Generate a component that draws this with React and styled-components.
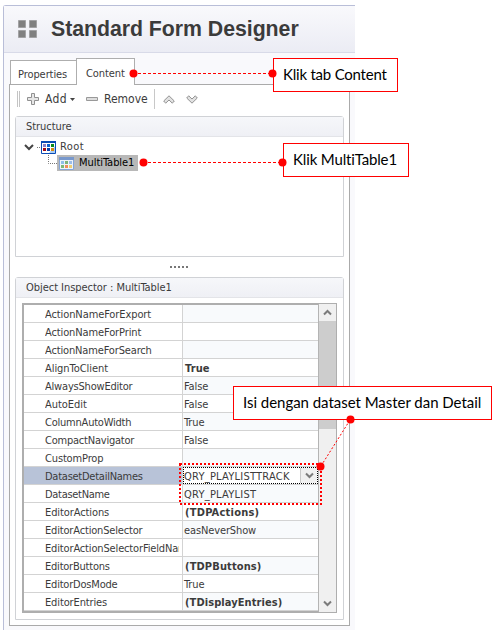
import React from "react";
import styled, { createGlobalStyle } from "styled-components";

const Global = createGlobalStyle`
  * { box-sizing: border-box; }
  body { margin: 0; background: #fff; overflow: hidden; }
`;

const Stage = styled.main`
  position: relative;
  width: 495px;
  height: 631px;
  padding: 5px 0 1px 3px;
  overflow: hidden;
  background: #fff;
  color: #3b3b3b;
  font: 11px/18px "DejaVu Sans Condensed", "DejaVu Sans", sans-serif;
  font-stretch: condensed;
  letter-spacing: -0.22px;
  white-space: nowrap;
`;

const Window = styled.section`
  display: flex;
  flex-direction: column;
  width: 352px;
  height: 625px;
  border: solid #b9bed8;
  border-width: 1px 0 0 1px;
  border-top-left-radius: 3px;
  background: #f9f9fc;
`;

const TitleBar = styled.header`
  display: flex;
  align-items: center;
  flex: none;
  height: 47px;
  padding-left: 14px;
  gap: 14px;
  border-bottom: 1px solid #d8dae8;
  background: linear-gradient(#f9f9fc, #ebecf4);
`;

const Title = styled.h1`
  margin: 0;
  font: bold 21.3px/46px "Liberation Sans", Arial, sans-serif;
  letter-spacing: -0.04px;
`;

const TabStrip = styled.nav`
  display: flex;
  align-items: flex-end;
  flex: none;
  height: 31px;
  padding-left: 6px;
  position: relative;
  z-index: 1;
`;

const Tab = styled.div`
  width: ${(p) => (p.$active ? 59 : 67)}px;
  height: ${(p) => (p.$active ? 27 : 24)}px;
  margin-right: ${(p) => (p.$active ? 0 : -1)}px;
  margin-bottom: ${(p) => (p.$active ? -1 : 0)}px;
  padding: ${(p) => (p.$active ? "6px 0 0 9px" : "5px 0 0 7px")};
  border: 1px solid #aeaeae;
  border-bottom: 0;
  background: #fff;
  letter-spacing: -0.08px;
`;

const Page = styled.section`
  display: flex;
  flex-direction: column;
  width: 341px;
  height: 542px;
  margin-left: 5px;
  padding: 0 5px;
  border: 1px solid #aaaaaa;
  background: #fff;
`;

const Toolbar = styled.div`
  display: flex;
  align-items: center;
  flex: none;
  height: 31px;
  padding: 0 0 3px 2px;
  font-size: 12px;
`;

const Grip = styled.i`
  width: 3px;
  height: 16px;
  border: solid #c4c4c4;
  border-width: 0 1px;
`;

const ToolButton = styled.span`
  display: flex;
  align-items: center;
  gap: 6px;
  width: ${(p) => p.$width}px;
  margin-left: ${(p) => p.$before}px;
  letter-spacing: ${(p) => p.$track || 0}px;
`;

const DropCaret = styled.svg`
  margin-left: -3px;
`;

const Separator = styled.i`
  width: 1px;
  height: 20px;
  margin-right: 8px;
  background: #c8c8c8;
`;

const Chevrons = styled.span`
  display: flex;
  gap: 11px;
`;

const Panel = styled.section`
  flex: none;
  height: ${(p) => p.$height}px;
  border: 1px solid #d0d2d6;
  border-radius: 3px 3px 0 0;
`;

const PanelTitle = styled.h2`
  height: 20px;
  margin: 0;
  padding: 1px 0 0 10px;
  border-bottom: 1px solid #e3e4e8;
  background: linear-gradient(#f6f7fa, #eff0f5);
  font: inherit;
  letter-spacing: ${(p) => p.$track}px;
`;

const TreeRow = styled.div`
  display: flex;
  align-items: center;
  height: 16px;
  padding-left: ${(p) => p.$indent}px;
`;

const Tree = styled.div`
  padding-top: 2px;
`;

const Guide = styled.svg`
  flex: none;
  display: block;
`;

const RootLabel = styled.span`
  padding-left: 4px;
  letter-spacing: 0.4px;
`;

const Selected = styled.span`
  display: flex;
  align-items: center;
  gap: 5px;
  width: 81px;
  height: 16px;
  padding-left: 2px;
  background: #b8b8b8;
  color: #000;
  letter-spacing: -0.05px;
`;

const Splitter = styled.div`
  display: flex;
  justify-content: center;
  flex: none;
  gap: 2px;
  height: 20px;
  padding: 9px 2px 0 0;
`;

const SplitDot = styled.i`
  width: 2px;
  height: 2px;
  background: #777;
`;

const GridBox = styled.div`
  display: flex;
  width: 315px;
  height: 310px;
  margin: 5px 0 0 6px;
  border: 2px solid #aeaeae;
  border-right-width: 1px;
`;

const Rows = styled.div`
  width: 294px;
`;

const Row = styled.div`
  display: grid;
  grid-template: 18px / 159px 135px;
`;

const Name = styled.div`
  margin-right: 1px;
  padding-left: 21px;
  border-bottom: 1px solid #d3d3d3;
  line-height: 19px;
  box-shadow: 1px 0 #d3d3d3;
  background: ${(p) => (p.$active ? "#b8c3d8" : "#fff")};
`;

const NameClip = styled.span`
  display: block;
  width: 134px;
  height: 17px;
  overflow: hidden;
  letter-spacing: ${(p) => p.$track}px;
`;

const Value = styled.div`
  padding-left: ${(p) => (p.$bold ? 2 : 1)}px;
  border-bottom: 1px solid #d3d3d3;
  line-height: 19px;
  background: ${(p) => (p.$tint ? "#f8fafc" : "#fff")};
  font-weight: ${(p) => (p.$bold ? 700 : 400)};
  letter-spacing: ${(p) => p.$track}px;
`;

const Editor = styled.div`
  display: flex;
  justify-content: space-between;
  height: 17px;
  margin-left: -1px;
  border: 1px dotted #000;
  background: #fff;
  line-height: 17px;
`;

const DropButton = styled.span`
  display: grid;
  place-items: center;
  width: 17px;
  border-left: 1px solid #c8c8c8;
  background: #f0f0f0;
`;

const ScrollBar = styled.div`
  display: flex;
  flex-direction: column;
  width: 18px;
  border-left: 1px solid #b4b4b4;
  margin-top: -1px;
  margin-bottom: -1px;
  background: #f0f0f0;
`;

const ScrollButton = styled.span`
  display: grid;
  place-items: center;
  height: 17px;
`;

const Thumb = styled.div`
  height: 108px;
  margin-bottom: auto;
  background: #cdcdcd;
`;

const Callout = styled.div`
  position: absolute;
  z-index: 2;
  left: ${(p) => p.$x}px;
  top: ${(p) => p.$y}px;
  width: ${(p) => p.$w}px;
  height: 34px;
  padding-left: 9px;
  border: 1px solid #f00;
  background: #fff;
  color: #000;
  font: 15px/31px Lato, sans-serif;
  font-variant-ligatures: none;
  letter-spacing: ${(p) => p.$track}px;
`;

const Connectors = styled.svg`
  position: absolute;
  z-index: 3;
  inset: 0;
  pointer-events: none;
`;

const rows = [
  { name: "ActionNameForExport", nameTrack: -0.1 },
  { name: "ActionNameForPrint", nameTrack: -0.12 },
  { name: "ActionNameForSearch", nameTrack: -0.15 },
  { name: "AlignToClient", value: "True", bold: true, nameTrack: -0.05, valueTrack: 0.1 },
  { name: "AlwaysShowEditor", value: "False", nameTrack: -0.2 },
  { name: "AutoEdit", value: "False", nameTrack: -0.05 },
  { name: "ColumnAutoWidth", value: "True" },
  { name: "CompactNavigator", value: "False" },
  { name: "CustomProp", nameTrack: -0.15 },
  { name: "DatasetDetailNames", value: "QRY_PLAYLISTTRACK", nameTrack: -0.25, valueTrack: 0.24 },
  { name: "DatasetName", value: "QRY_PLAYLIST", nameTrack: -0.3, valueTrack: 0.24 },
  { name: "EditorActions", value: "(TDPActions)", bold: true, nameTrack: -0.1, valueTrack: 0.22 },
  { name: "EditorActionSelector", value: "easNeverShow", nameTrack: -0.17, valueTrack: -0.12 },
  { name: "EditorActionSelectorFieldName", nameTrack: -0.15 },
  { name: "EditorButtons", value: "(TDPButtons)", bold: true, valueTrack: 0.12 },
  { name: "EditorDosMode", value: "True", nameTrack: -0.2 },
  { name: "EditorEntries", value: "(TDisplayEntries)", bold: true, nameTrack: -0.13, valueTrack: 0.08 },
];

const AppIcon = () => (
  <svg width="19" height="19" fill="#808080" stroke="#a2a2a4" strokeWidth="1">
    <path d="M.5 .5h7v7h-7zM11.500 .5h7v7h-7zM.5 10.500h7v7h-7zM11.500 10.500h7v7h-7z" />
  </svg>
);

const Chevron = ({ up }) => (
  <svg width="12" height="9" fill="#e2e2e2" stroke="#929292">
    <path
      transform={up ? undefined : "matrix(1 0 0 -1 0 9)"}
      d="M6 .8 L11.300 6 L9.300 8.200 L6 5 L2.700 8.200 L.7 6Z"
    />
  </svg>
);

const SmallArrow = ({ up }) => (
  <svg width="9" height="7" fill="none" stroke="#7b7b7b" strokeWidth="2">
    <path d={up ? "M1 5.500 L4.500 2 L8 5.500" : "M1 1.500 L4.500 5 L8 1.500"} />
  </svg>
);

const cell = (x, y, c) => <rect key={`${x}${y}`} x={x} y={y} width="3" height="3" fill={c} />;

const RootIcon = () => (
  <svg width="15" height="13">
    <path d="M.5 .5h14v12h-14z" fill="#fff" stroke="#0a4cb5" />
    <path d="M8 12h6V5z" fill="#a9cdf5" />
    <path d="M0 0h15v2H0z" fill="#0a4cb5" />
    {cell(2, 3, "#8a7fc4")}{cell(6, 3, "#0a62d0")}{cell(10, 3, "#0a8a1c")}
    {cell(2, 7, "#a00a18")}{cell(6, 7, "#0a3fa8")}{cell(10, 7, "#d88a10")}
  </svg>
);

const TableIcon = () => (
  <svg width="15" height="13">
    <path d="M.5 .5h14v12h-14z" fill="#eef3fa" stroke="#84a5d8" />
    <path d="M0 0h15v3H0z" fill="#7898cc" />
    {cell(2, 4, "#8fc0ea")}{cell(6, 4, "#7db27c")}{cell(10, 4, "#9cbde8")}
    {cell(2, 8, "#7fb878")}{cell(6, 8, "#f08c5c")}{cell(10, 8, "#efcf72")}
  </svg>
);

export default function App() {
  return (
    <Stage>
      <Global />
      <Window>
        <TitleBar>
          <AppIcon />
          <Title>Standard Form Designer</Title>
        </TitleBar>
        <TabStrip>
          <Tab>Properties</Tab>
          <Tab $active>Content</Tab>
        </TabStrip>
        <Page>
          <Toolbar>
            <Grip />
            <ToolButton $width={49} $before={7} $track={0.3}>
              <svg width="12" height="12" fill="#e6e6e6" stroke="#909090">
                <path d="M4.500 .5h3v4h4v3h-4v4h-3v-4h-4v-3h4z" />
              </svg>
              Add
              <DropCaret width="5" height="3">
                <path d="M0 0h5L2.500 3z" fill="#444" />
              </DropCaret>
            </ToolButton>
            <ToolButton $width={68} $before={10}>
              <svg width="12" height="4" fill="#ddd" stroke="#999">
                <path d="M.5 .5h11v3H.5z" />
              </svg>
              Remove
            </ToolButton>
            <Separator />
            <Chevrons>
              <Chevron up />
              <Chevron />
            </Chevrons>
          </Toolbar>
          <Panel $height={141}>
            <PanelTitle $track={-0.05}>Structure</PanelTitle>
            <Tree>
              <TreeRow $indent={8}>
                <Guide width="17" height="16">
                  <path d="M1 6l4 4l4-4" fill="none" stroke="#444" strokeWidth="2" />
                  <path d="M13 8.500h4" stroke="#777" strokeDasharray="1 1" />
                </Guide>
                <RootIcon />
                <RootLabel>Root</RootLabel>
              </TreeRow>
              <TreeRow $indent={32}>
                <Guide width="9" height="16">
                  <path d="M.5 0v8.500H9" fill="none" stroke="#777" strokeDasharray="1 1" />
                </Guide>
                <Selected>
                  <TableIcon />
                  MultiTable1
                </Selected>
              </TreeRow>
            </Tree>
          </Panel>
          <Splitter>
            {[0, 1, 2, 3, 4].map((n) => <SplitDot key={n} />)}
          </Splitter>
          <Panel $height={343}>
            <PanelTitle $track={-0.04}>Object Inspector : MultiTable1</PanelTitle>
            <GridBox>
              <Rows>
                {rows.map(({ name, value, bold, nameTrack = -0.22, valueTrack = -0.1 }, i) => (
                  <Row key={name}>
                    <Name $active={i === 9}>
                      <NameClip $track={nameTrack}>{name}</NameClip>
                    </Name>
                    <Value $tint={i % 2 === 0} $bold={bold} $track={valueTrack}>
                      {i === 9 ? (
                        <Editor>
                          {value}
                          <DropButton><SmallArrow /></DropButton>
                        </Editor>
                      ) : value}
                    </Value>
                  </Row>
                ))}
              </Rows>
              <ScrollBar>
                <ScrollButton><SmallArrow up /></ScrollButton>
                <Thumb />
                <ScrollButton><SmallArrow /></ScrollButton>
              </ScrollBar>
            </GridBox>
          </Panel>
        </Page>
      </Window>
      <Callout $x={273} $y={58} $w={125} $track={-0.22}>Klik tab Content</Callout>
      <Callout $x={283} $y={143} $w={126} $track={-0.15}>Klik MultiTable1</Callout>
      <Callout $x={233} $y={386} $w={259} $track={-0.03}>Isi dengan dataset Master dan Detail</Callout>
      <Connectors width="495" height="631" fill="none" stroke="#f00">
        <path d="M138 73.500H269M148 162.500H279" strokeDasharray="3 2" />
        <path d="M321 466L350 420" strokeDasharray="2 2" />
        <path d="M180 464H321V504H180Z" strokeWidth="2" strokeDasharray="2 2" />
        <g fill="#f00" stroke="none">
          <circle cx="133.500" cy="73.500" r="4" />
          <circle cx="272.500" cy="73.500" r="4" />
          <circle cx="143.500" cy="162.500" r="4" />
          <circle cx="282.500" cy="162.500" r="4" />
          <circle cx="320.500" cy="466.500" r="4" />
          <circle cx="350.500" cy="419.500" r="4" />
        </g>
      </Connectors>
    </Stage>
  );
}
